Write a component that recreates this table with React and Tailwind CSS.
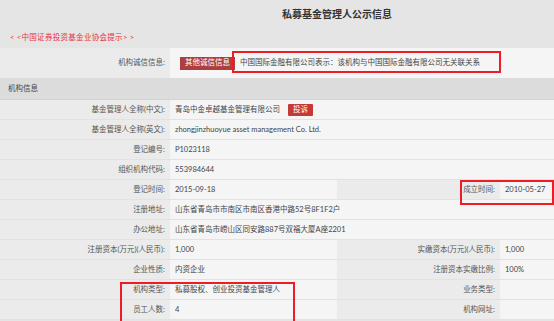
const font = { fontFamily: 'Lato, "Noto Sans CJK SC", sans-serif' };

const Label = ({ children, w = "w-[170px]", cls = "" }) => (
  <div className={`${w} shrink-0 h-full flex items-center justify-end pr-[5px] bg-[#ebebeb] text-[#555] ${cls}`}>
    {children}
  </div>
);

const Value = ({ children, w = "flex-1", cls = "" }) => (
  <div className={`${w} h-full flex items-center pl-[5px] bg-[#f5f5f5] text-[#444] ${cls}`}>
    {children}
  </div>
);

const Row = ({ children }) => (
  <div className="flex h-[20px] border-b border-[#e2e2e2]">{children}</div>
);

const FullRow = ({ label, children }) => (
  <Row>
    <Label>{label}</Label>
    <Value>{children}</Value>
  </Row>
);

const SplitRow = ({ l1, v1, l2, v2 }) => (
  <Row>
    <Label>{l1}</Label>
    <Value w="w-[167px] shrink-0">{v1}</Value>
    <Label w="w-[163px]" cls="pr-[3px]">{l2}</Label>
    <Value>{v2}</Value>
  </Row>
);

export default function App() {
  return (
    <div
      className="relative w-[554px] h-[321px] overflow-hidden bg-[#e5e5e5] text-[7.5px] leading-none"
      style={font}
    >
      <div className="h-[28px] flex items-center pl-[282px] text-[10px] font-bold text-[#333]">
        私募基金管理人公示信息
      </div>
      <div className="h-[20px] flex items-center pl-[10px] text-[#e8343a] tracking-[0.3px]">
        &lt; &lt;中国证券投资基金业协会提示&gt; &gt;
      </div>

      <div className="flex h-[30px]">
        <Label>机构诚信信息:</Label>
        <Value cls="pl-[10px]">
          <span className="bg-[#ad403e] text-white px-[5px] h-[13px] flex items-center">其他诚信信息</span>
          <span className="ml-[5px]">中国国际金融有限公司表示：该机构与中国国际金融有限公司无关联关系</span>
        </Value>
      </div>

      <div className="h-[22px] flex items-center pl-[8px] bg-[#dcdcdc] text-[#444] border-b border-[#d4d4d4]">
        机构信息
      </div>

      <FullRow label="基金管理人全称(中文):">
        青岛中金卓越基金管理有限公司
        <span className="ml-[8px] bg-[#c53a36] text-white px-[5px] h-[12px] flex items-center rounded-[1px]">投诉</span>
      </FullRow>
      <FullRow label="基金管理人全称(英文):">zhongjinzhuoyue asset management Co. Ltd.</FullRow>
      <FullRow label="登记编号:">P1023118</FullRow>
      <FullRow label="组织机构代码:">553984644</FullRow>
      <SplitRow l1="登记时间:" v1="2015-09-18" l2="成立时间:" v2="2010-05-27" />
      <FullRow label="注册地址:">山东省青岛市市南区市南区香港中路52号8F1F2户</FullRow>
      <FullRow label="办公地址:">山东省青岛市崂山区同安路887号双福大厦A座2201</FullRow>
      <SplitRow l1="注册资本(万元)(人民币):" v1="1,000" l2="实缴资本(万元)(人民币):" v2="1,000" />
      <SplitRow l1="企业性质:" v1="内资企业" l2="注册资本实缴比例:" v2="100%" />
      <SplitRow l1="机构类型:" v1="私募股权、创业投资基金管理人" l2="业务类型:" v2="" />
      <SplitRow l1="员工人数:" v1="4" l2="机构网址:" v2="" />

      <div className="absolute left-[232px] top-[51px] w-[269px] h-[22px] border-2 border-[#ee1c25]" />
      <div className="absolute left-[460px] top-[180px] w-[94px] h-[25px] border-2 border-[#ee1c25]" />
      <div className="absolute left-[120px] top-[282px] w-[175px] h-[45px] border-2 border-[#ee1c25]" />
    </div>
  );
}
